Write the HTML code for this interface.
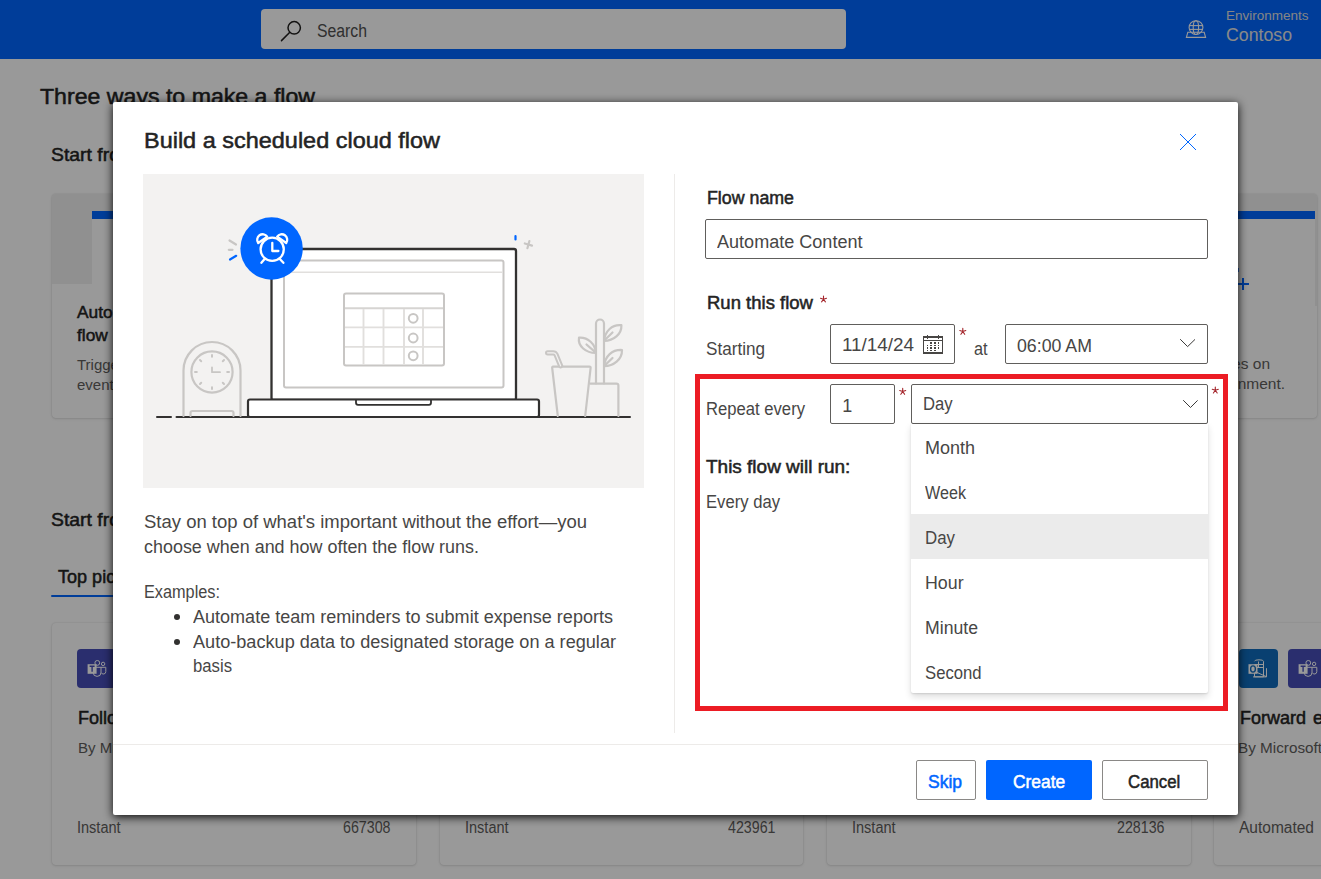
<!DOCTYPE html>
<html>
<head>
<meta charset="utf-8">
<style>
html,body{margin:0;padding:0;}
body{width:1321px;height:879px;overflow:hidden;position:relative;background:#ffffff;font-family:"Liberation Sans",sans-serif;}
.a{position:absolute;box-sizing:border-box;}
.t{position:absolute;white-space:nowrap;line-height:1;transform-origin:0 0;}
#hdr{left:0;top:0;width:1321px;height:59px;background:#0066ff;}
#search{left:261px;top:9px;width:585px;height:40px;background:#ffffff;border-radius:4px;}
.card{position:absolute;box-sizing:border-box;background:#ffffff;border-radius:4px;box-shadow:0 0 2px rgba(0,0,0,0.14),0 1px 3px rgba(0,0,0,0.10);overflow:hidden;}
#overlay{left:0;top:0;width:1321px;height:879px;background:rgba(0,0,0,0.4);}
#modal{left:113px;top:102px;width:1125px;height:713px;background:#ffffff;border-radius:2px;
  box-shadow:0 2px 10px rgba(0,0,0,0.95);}
.inp{position:absolute;box-sizing:border-box;border:1px solid #605e5c;border-radius:2px;background:#fff;}
.btn{position:absolute;box-sizing:border-box;border-radius:2px;}
</style>
</head>
<body>
<!-- ===== background page ===== -->
<div class="a" id="hdr"></div>
<div class="a" id="search"></div>
<svg class="a" style="left:276px;top:18px" width="30" height="28" viewBox="276 18 30 28">
  <circle cx="294.2" cy="27.8" r="6.2" fill="none" stroke="#201f1e" stroke-width="1.5"/>
  <line x1="289.8" y1="32.3" x2="281.5" y2="40.6" stroke="#201f1e" stroke-width="1.5" stroke-linecap="round"/>
</svg>
<svg class="a" style="left:1182px;top:14px" width="28" height="28" viewBox="1182 14 28 28">
  <g fill="none" stroke="#ffffff" stroke-width="1.1">
    <path d="M1187.8,32.3 H1204.2 L1205.6,37.4 H1186.4 Z"/>
    <circle cx="1196" cy="27.6" r="6.9"/>
    <ellipse cx="1195.9" cy="27.6" rx="2.7" ry="6.9"/>
    <line x1="1189.3" y1="25.6" x2="1202.7" y2="25.6"/>
    <line x1="1189.3" y1="29.4" x2="1202.7" y2="29.4"/>
  </g>
</svg>

<!-- top cards -->
<div class="card" style="left:52px;top:194px;width:406px;height:224px;">
  <div class="a" style="left:0;top:0;width:406px;height:90px;background:#f0f0f0;"></div>
  <div class="a" style="left:40px;top:17px;width:366px;height:73px;background:#ffffff;border-top:8px solid #0066ff;"></div>
</div>
<div class="card" style="left:911px;top:194px;width:406px;height:224px;">
  <div class="a" style="left:0;top:0;width:406px;height:112px;background:#f0f0f0;"></div>
  <div class="a" style="left:0;top:17px;width:404px;height:95px;background:#ffffff;border-top:8px solid #0066ff;"></div>
  <svg class="a" style="left:320px;top:70px" width="20" height="26" viewBox="1231 264 20 26">
    <line x1="1243" y1="278" x2="1243" y2="290" stroke="#0066ff" stroke-width="2"/>
    <line x1="1237" y1="284" x2="1249" y2="284" stroke="#0066ff" stroke-width="2"/>
    <line x1="1238" y1="268" x2="1238" y2="272" stroke="#0066ff" stroke-width="1.5"/>
  </svg>
</div>
<!-- tab underline -->
<div class="a" style="left:50.5px;top:595px;width:90px;height:2px;border-radius:1px;background:#0066ff;"></div>
<!-- bottom cards -->
<div class="card" style="left:52px;top:623px;width:363.5px;height:242px;">
  <div class="a" style="left:25px;top:26px;width:39px;height:39px;border-radius:4px;background:#464eb8;"></div>
</div>
<svg class="a" style="left:77px;top:649px" width="39" height="39" viewBox="0 0 39 39">
  <g fill="none" stroke="#ffffff" stroke-width="1">
    <circle cx="20.3" cy="13.9" r="2.4"/>
    <circle cx="26.1" cy="14.9" r="1.7"/>
    <path d="M16.5,18.3 H24 V23.5 A3.9,3.9 0 0 1 16.2,23.5"/>
    <path d="M24,18.3 H28.8 V22.6 A2.4,2.4 0 0 1 24.2,23.6"/>
  </g>
  <rect x="10.6" y="15.2" width="9" height="9.6" fill="#ffffff"/>
  <path d="M12.6,17.3 H17.6 M15.1,17.3 V22.8" stroke="#464eb8" stroke-width="1.4"/>
</svg>
<div class="card" style="left:439.5px;top:623px;width:363.5px;height:242px;"></div>
<div class="card" style="left:827px;top:623px;width:363.5px;height:242px;"></div>
<div class="card" style="left:1213.5px;top:623px;width:363.5px;height:242px;">
  <div class="a" style="left:25px;top:26px;width:39px;height:39px;border-radius:4px;background:#0f6cbd;"></div>
  <div class="a" style="left:74.5px;top:26px;width:39px;height:39px;border-radius:4px;background:#464eb8;"></div>
</div>
<svg class="a" style="left:1238.5px;top:649px" width="39" height="39" viewBox="0 0 39 39">
  <g fill="none" stroke="#ffffff" stroke-width="1">
    <path d="M15.5,12.3 Q15.5,10.8 20,10.8 Q24.5,10.8 24.5,12.3 V27.8 H15.5 V20"/>
    <line x1="19.5" y1="12.5" x2="19.5" y2="19"/>
    <line x1="15.5" y1="15.5" x2="24.5" y2="15.5"/>
    <line x1="15.5" y1="18.5" x2="24.5" y2="18.5"/>
    <path d="M14,27.9 H27.5 V19.2"/>
    <path d="M17.5,23.2 L27,27.5"/>
  </g>
  <rect x="9.5" y="15.2" width="9" height="9.6" fill="#ffffff"/>
  <ellipse cx="14" cy="20" rx="2.4" ry="3.1" fill="none" stroke="#0f6cbd" stroke-width="1.4"/>
</svg>
<svg class="a" style="left:1288px;top:649px" width="39" height="39" viewBox="0 0 39 39">
  <g fill="none" stroke="#ffffff" stroke-width="1">
    <circle cx="20.3" cy="13.9" r="2.4"/>
    <circle cx="26.1" cy="14.9" r="1.7"/>
    <path d="M16.5,18.3 H24 V23.5 A3.9,3.9 0 0 1 16.2,23.5"/>
    <path d="M24,18.3 H28.8 V22.6 A2.4,2.4 0 0 1 24.2,23.6"/>
  </g>
  <rect x="10.6" y="15.2" width="9" height="9.6" fill="#ffffff"/>
  <path d="M12.6,17.3 H17.6 M15.1,17.3 V22.8" stroke="#464eb8" stroke-width="1.4"/>
</svg>
<div class="t" style="left:317.0px;top:22.46px;font-size:18px;font-weight:400;color:#505050;transform:scaleX(0.8765);">Search</div>
<div class="t" style="left:1226.0px;top:8.70px;font-size:13px;font-weight:400;color:#dedede;transform:scaleX(1.0379);">Environments</div>
<div class="t" style="left:1226.2px;top:25.64px;font-size:18.5px;font-weight:400;color:#e4e4e4;transform:scaleX(0.9578);">Contoso</div>
<div class="t" style="left:40.0px;top:86.50px;font-size:21.5px;-webkit-text-stroke:0.5px #242424;color:#242424;transform:scaleX(1.0754);">Three ways to make a flow</div>
<div class="t" style="left:50.5px;top:145.32px;font-size:19px;-webkit-text-stroke:0.5px #242424;color:#242424;transform:scaleX(1.0200);">Start from blank</div>
<div class="t" style="left:77.0px;top:303.91px;font-size:17px;-webkit-text-stroke:0.5px #242424;color:#242424;transform:scaleX(1.0200);">Automated cloud</div>
<div class="t" style="left:77.0px;top:326.71px;font-size:17px;-webkit-text-stroke:0.5px #242424;color:#242424;transform:scaleX(1.0200);">flow</div>
<div class="t" style="left:77.0px;top:356.60px;font-size:15px;font-weight:400;color:#605e5c;">Triggered by a designated</div>
<div class="t" style="left:77.0px;top:376.50px;font-size:15px;font-weight:400;color:#605e5c;">event.</div>
<div class="t" style="left:1158.0px;top:356.48px;font-size:15.5px;font-weight:400;color:#605e5c;">flow changes on</div>
<div class="t" style="left:1144.6px;top:376.48px;font-size:15.5px;font-weight:400;color:#605e5c;">in your environment.</div>
<div class="t" style="left:50.5px;top:509.82px;font-size:19px;-webkit-text-stroke:0.5px #242424;color:#242424;transform:scaleX(1.0200);">Start from a template</div>
<div class="t" style="left:57.5px;top:568.52px;font-size:17.7px;-webkit-text-stroke:0.5px #242424;color:#242424;transform:scaleX(1.0200);">Top picks</div>
<div class="t" style="left:78.3px;top:709.52px;font-size:17.7px;-webkit-text-stroke:0.5px #242424;color:#242424;transform:scaleX(1.0200);">Follow up on a message</div>
<div class="t" style="left:77.5px;top:741.13px;font-size:14.5px;font-weight:400;color:#605e5c;transform:scaleX(1.0405);">By Microsoft</div>
<div class="t" style="left:77.0px;top:820.49px;font-size:15.6px;font-weight:400;color:#605e5c;transform:scaleX(0.9314);">Instant</div>
<div class="t" style="left:1239.7px;top:709.52px;font-size:17.7px;-webkit-text-stroke:0.5px #242424;color:#242424;transform:scaleX(1.0173);">Forward</div>
<div class="t" style="left:1312.9px;top:709.52px;font-size:17.7px;-webkit-text-stroke:0.5px #242424;color:#242424;transform:scaleX(1.0200);">emails</div>
<div class="t" style="left:1238.3px;top:741.13px;font-size:14.5px;font-weight:400;color:#605e5c;transform:scaleX(1.0531);">By Microsoft</div>
<div class="t" style="left:1238.5px;top:820.49px;font-size:15.6px;font-weight:400;color:#605e5c;transform:scaleX(0.9944);">Automated</div>
<div class="t" style="left:464.7px;top:820.49px;font-size:15.6px;font-weight:400;color:#605e5c;transform:scaleX(0.9314);">Instant</div>
<div class="t" style="left:851.5px;top:820.49px;font-size:15.6px;font-weight:400;color:#605e5c;transform:scaleX(0.9314);">Instant</div>
<div class="t" style="left:343.0px;top:820.49px;font-size:15.6px;font-weight:400;color:#605e5c;transform:scaleX(0.9126);">667308</div>
<div class="t" style="left:728.3px;top:820.49px;font-size:15.6px;font-weight:400;color:#605e5c;transform:scaleX(0.9126);">423961</div>
<div class="t" style="left:1117.0px;top:820.49px;font-size:15.6px;font-weight:400;color:#605e5c;transform:scaleX(0.9126);">228136</div>

<!-- ===== overlay ===== -->
<div class="a" id="overlay"></div>

<!-- ===== modal ===== -->
<div class="a" id="modal"></div>
<svg class="a" style="left:1175px;top:129px" width="26" height="26" viewBox="1175 129 26 26">
  <path d="M1180,134 L1196,150 M1196,134 L1180,150" stroke="#0066ff" stroke-width="1" fill="none"/>
</svg>

<!-- illustration -->
<svg class="a" style="left:143px;top:174px" width="501" height="314" viewBox="143 174 501 314">
  <rect x="143" y="174" width="501" height="314" fill="#f3f2f1"/>
  <!-- ground -->
  <g stroke="#323130" stroke-width="2" stroke-linecap="round" fill="none">
    <line x1="157" y1="417" x2="171" y2="417"/>
    <line x1="176.5" y1="417" x2="630" y2="417"/>
  </g>
  <!-- mantel clock -->
  <g fill="none" stroke="#c8c6c4" stroke-width="2.2" stroke-linecap="round" stroke-linejoin="round">
    <path d="M183.5,416 V370.5 A28.5,28.5 0 0 1 240.5,370.5 V416"/>
    <circle cx="212" cy="372" r="20.6" stroke-width="2.2"/>
    <path d="M190.5,416 V413 Q190.5,411 192.5,411 H231.5 Q233.5,411 233.5,413 V416"/>
    <polyline points="212,367.5 212,372.2 220,372.2" stroke-width="1.8"/>
  </g>
  <g stroke="#c8c6c4" stroke-width="2" stroke-linecap="round">
    <line x1="212" y1="355" x2="212" y2="356.8"/>
    <line x1="212" y1="387.2" x2="212" y2="389"/>
    <line x1="195" y1="372" x2="196.8" y2="372"/>
    <line x1="227.2" y1="372" x2="229" y2="372"/>
    <line x1="200" y1="360" x2="201.2" y2="361.2"/>
    <line x1="222.8" y1="382.8" x2="224" y2="384"/>
    <line x1="224" y1="360" x2="222.8" y2="361.2"/>
    <line x1="201.2" y1="382.8" x2="200" y2="384"/>
  </g>
  <!-- laptop -->
  <rect x="271.5" y="249" width="244.5" height="151" rx="2" fill="#ffffff" stroke="#323130" stroke-width="2.3"/>
  <rect x="284" y="260.5" width="219.5" height="127" rx="2" fill="#ffffff" stroke="#c8c6c4" stroke-width="2"/>
  <line x1="285" y1="272.3" x2="502.5" y2="272.3" stroke="#e1dfdd" stroke-width="1.6"/>
  <rect x="344" y="293.5" width="100" height="72" rx="2" fill="#ffffff" stroke="#c8c6c4" stroke-width="2"/>
  <g stroke="#e1dfdd" stroke-width="1.9">
    <line x1="345" y1="308.3" x2="443" y2="308.3" stroke="#d6d4d2"/>
    <line x1="345" y1="327.4" x2="443" y2="327.4"/>
    <line x1="345" y1="346.9" x2="443" y2="346.9"/>
    <line x1="363.5" y1="309" x2="363.5" y2="364.6"/>
    <line x1="383.5" y1="309" x2="383.5" y2="364.6"/>
    <line x1="404" y1="309" x2="404" y2="364.6"/>
    <line x1="423" y1="309" x2="423" y2="364.6"/>
  </g>
  <g fill="#ffffff" stroke="#c8c6c4" stroke-width="2">
    <circle cx="413.2" cy="318.3" r="4.4"/>
    <circle cx="413.2" cy="338" r="4.4"/>
    <circle cx="413.2" cy="355.8" r="4.4"/>
  </g>
  <rect x="248" y="399.5" width="291" height="17.5" rx="2" fill="#ffffff" stroke="#323130" stroke-width="2.2"/>
  <path d="M356,400 V402.8 Q356,404.8 358,404.8 H429 Q431,404.8 431,402.8 V400" fill="none" stroke="#323130" stroke-width="1.8"/>
  <!-- alarm badge -->
  <circle cx="271.6" cy="248.5" r="31.2" fill="#0066ff"/>
  <g fill="none" stroke="#ffffff" stroke-width="2.3" stroke-linecap="round" stroke-linejoin="round">
    <circle cx="272.2" cy="249.3" r="11.6"/>
    <polyline points="272.3,242.8 272.3,251 278.4,251"/>
    <path d="M258.2,243 A5.4,5.4 0 0 1 267.2,236.6 Z"/>
    <path d="M286.2,243 A5.4,5.4 0 0 0 277.2,236.6 Z"/>
    <line x1="264.6" y1="259" x2="261.4" y2="262.8"/>
    <line x1="279.8" y1="259" x2="283.4" y2="262.8"/>
  </g>
  <!-- sparks -->
  <g stroke-width="2.2" stroke-linecap="round">
    <line x1="229.5" y1="240.5" x2="236" y2="244.5" stroke="#c8c6c4"/>
    <line x1="228.8" y1="249.8" x2="232.5" y2="249.8" stroke="#c8c6c4"/>
    <line x1="230" y1="259.5" x2="236.2" y2="255.8" stroke="#0066ff"/>
    <line x1="515.5" y1="236" x2="515.5" y2="239.5" stroke="#0066ff"/>
    <line x1="524.8" y1="243.5" x2="532" y2="245.6" stroke="#c8c6c4"/>
    <line x1="529.4" y1="241" x2="527.4" y2="248.2" stroke="#c8c6c4"/>
  </g>
  <!-- cup & plant -->
  <g fill="none" stroke="#c8c6c4" stroke-width="2.2" stroke-linecap="round" stroke-linejoin="round">
    <path d="M590.2,383.6 H616.4 Q618.4,383.6 618.4,385.6 V416"/>
    <path d="M596,383.4 V323.5 A4,4 0 0 1 604,323.5 V383.4"/>
    <path d="M595.8,353 C586,353 577.5,346 579,337.6 C588,337 595.4,344 595.8,353 Z"/>
    <line x1="595.5" y1="352.4" x2="586.5" y2="344.5"/>
    <path d="M604.2,340.8 C605,331 612,324.2 621.4,325.2 C621.8,334.2 613.5,340.8 604.2,340.8 Z"/>
    <line x1="604.8" y1="340" x2="612.5" y2="332.5"/>
    <path d="M604.2,366.2 C605,356.2 612,349.5 622,350 C622.2,359.5 613.5,366.2 604.2,366.2 Z"/>
    <line x1="604.8" y1="365.4" x2="612.5" y2="358"/>
    <path d="M553,366.6 H589.5 Q590.8,366.6 590.6,368 L585.2,416 H557.8 L552.2,368 Q552,366.6 553,366.6 Z" fill="#f3f2f1" stroke="none"/>
    <path d="M557.8,416 L552.2,368 Q552,366.6 553,366.6 H589.5 Q590.8,366.6 590.6,368 L585.2,416"/>
  </g>
  <g fill="none" stroke-linecap="round" stroke-linejoin="round">
    <path d="M560.6,365.8 L556,354.6 Q555.2,352.8 553.2,352.8 H547.6" stroke="#c8c6c4" stroke-width="5.2"/>
    <path d="M560.6,365.8 L556,354.6 Q555.2,352.8 553.2,352.8 H547.6" stroke="#f3f2f1" stroke-width="1.2"/>
  </g>
</svg>

<!-- divider -->
<div class="a" style="left:674px;top:174px;width:1px;height:559px;background:#edebe9;"></div>

<!-- inputs -->
<div class="inp" style="left:705px;top:219px;width:503px;height:40px;"></div>
<div class="inp" style="left:830px;top:324px;width:125px;height:40px;"></div>
<div class="inp" style="left:1005px;top:324px;width:203px;height:40px;"></div>
<div class="inp" style="left:830px;top:384px;width:65px;height:40px;"></div>
<div class="inp" style="left:911px;top:384px;width:297px;height:40px;"></div>

<!-- calendar icon -->
<svg class="a" style="left:0;top:0" width="1321" height="879" viewBox="0 0 1321 879" shape-rendering="crispEdges"><g fill="#484644"><rect x="923" y="336" width="20" height="2"/><rect x="923" y="340" width="20" height="1"/><rect x="923" y="336" width="1" height="18"/><rect x="942" y="336" width="1" height="18"/><rect x="923" y="352" width="20" height="2"/><rect x="927" y="335" width="1" height="4"/><rect x="938" y="335" width="1" height="4"/><rect x="930" y="342" width="2" height="2"/><rect x="934" y="342" width="2" height="2"/><rect x="938" y="342" width="1" height="2"/><rect x="927" y="345" width="1" height="1"/><rect x="930" y="345" width="2" height="1"/><rect x="934" y="345" width="2" height="1"/><rect x="938" y="345" width="1" height="1"/><rect x="927" y="347" width="1" height="2"/><rect x="930" y="347" width="2" height="2"/><rect x="934" y="347" width="2" height="2"/><rect x="938" y="347" width="1" height="2"/><rect x="927" y="350" width="1" height="1"/><rect x="930" y="350" width="2" height="1"/><rect x="934" y="350" width="2" height="1"/></g></svg>

<!-- chevrons -->
<svg class="a" style="left:1178px;top:336px" width="22" height="14" viewBox="1178 336 22 14">
  <polyline points="1180.2,339.2 1187.6,346.6 1195,339.4" fill="none" stroke="#3b3a39" stroke-width="1"/>
</svg>
<svg class="a" style="left:1180px;top:396px" width="22" height="14" viewBox="1180 396 22 14">
  <polyline points="1183.2,400.2 1190.5,407.5 1197.6,400.4" fill="none" stroke="#3b3a39" stroke-width="1"/>
</svg>

<!-- asterisks -->
<svg class="a" style="left:0;top:0" width="1321" height="879" viewBox="0 0 1321 879">
  <g stroke="#a4262c" stroke-width="1.1" stroke-linecap="round">
    <g transform="translate(823.5,299.2)"><path d="M0,-3.2 V0 M0,0 L-3,-1 M0,0 L3,-1 M0,0 L-1.9,2.7 M0,0 L1.9,2.7"/></g>
    <g transform="translate(962.8,331.6)"><path d="M0,-3.2 V0 M0,0 L-3,-1 M0,0 L3,-1 M0,0 L-1.9,2.7 M0,0 L1.9,2.7"/></g>
    <g transform="translate(902.7,391.6)"><path d="M0,-3.2 V0 M0,0 L-3,-1 M0,0 L3,-1 M0,0 L-1.9,2.7 M0,0 L1.9,2.7"/></g>
    <g transform="translate(1215.3,390.3)"><path d="M0,-3.2 V0 M0,0 L-3,-1 M0,0 L3,-1 M0,0 L-1.9,2.7 M0,0 L1.9,2.7"/></g>
  </g>
</svg>

<!-- red highlight -->
<div class="a" style="left:695px;top:374px;width:533px;height:337px;border:5px solid #ec1c24;"></div>

<!-- dropdown list -->
<div class="a" style="left:911px;top:424px;width:297px;height:269px;background:#ffffff;border-radius:0 0 2px 2px;box-shadow:0 3.2px 7.2px rgba(0,0,0,0.13),0 0.6px 1.8px rgba(0,0,0,0.11);"></div>
<div class="a" style="left:911px;top:514px;width:297px;height:44.5px;background:#ebebeb;"></div>

<!-- footer -->
<div class="a" style="left:113px;top:744px;width:1125px;height:1px;background:#edebe9;"></div>
<div class="btn" style="left:916px;top:760px;width:60px;height:40px;border:1px solid #8a8886;background:#fff;"></div>
<div class="btn" style="left:986px;top:760px;width:106px;height:40px;background:#0066ff;"></div>
<div class="btn" style="left:1102px;top:760px;width:106px;height:40px;border:1px solid #8a8886;background:#fff;"></div>

<div class="a" style="left:173.5px;top:613.7px;width:6px;height:6px;border-radius:50%;background:#323130;"></div>
<div class="a" style="left:173.5px;top:638.7px;width:6px;height:6px;border-radius:50%;background:#323130;"></div>
<div class="t" style="left:144.0px;top:131.30px;font-size:21.5px;-webkit-text-stroke:0.5px #242424;color:#242424;transform:scaleX(1.0910);">Build a scheduled cloud flow</div>
<div class="t" style="left:143.6px;top:513.99px;font-size:17.5px;font-weight:400;color:#474645;transform:scaleX(1.0564);">Stay on top of what&#x27;s important without the effort—you</div>
<div class="t" style="left:143.6px;top:538.89px;font-size:17.5px;font-weight:400;color:#474645;transform:scaleX(1.0248);">choose when and how often the flow runs.</div>
<div class="t" style="left:143.6px;top:583.59px;font-size:17.5px;font-weight:400;color:#474645;transform:scaleX(0.9302);">Examples:</div>
<div class="t" style="left:193.4px;top:608.69px;font-size:17.5px;font-weight:400;color:#474645;transform:scaleX(1.0305);">Automate team reminders to submit expense reports</div>
<div class="t" style="left:193.4px;top:633.89px;font-size:17.5px;font-weight:400;color:#474645;transform:scaleX(1.0352);">Auto-backup data to designated storage on a regular</div>
<div class="t" style="left:193.4px;top:657.89px;font-size:17.5px;font-weight:400;color:#474645;transform:scaleX(0.9545);">basis</div>
<div class="t" style="left:706.5px;top:189.99px;font-size:17.5px;-webkit-text-stroke:0.5px #242424;color:#242424;transform:scaleX(1.0164);">Flow name</div>
<div class="t" style="left:716.5px;top:232.86px;font-size:18px;font-weight:400;color:#474645;transform:scaleX(1.0028);">Automate Content</div>
<div class="t" style="left:706.5px;top:294.79px;font-size:17.5px;-webkit-text-stroke:0.5px #242424;color:#242424;transform:scaleX(1.0580);">Run this flow</div>
<div class="t" style="left:705.5px;top:341.39px;font-size:17.5px;font-weight:400;color:#474645;transform:scaleX(0.9782);">Starting</div>
<div class="t" style="left:842.0px;top:336.46px;font-size:18px;font-weight:400;color:#474645;transform:scaleX(1.0475);">11/14/24</div>
<div class="t" style="left:973.6px;top:341.29px;font-size:17.5px;font-weight:400;color:#474645;transform:scaleX(0.9309);">at</div>
<div class="t" style="left:1016.5px;top:337.46px;font-size:18px;font-weight:400;color:#474645;transform:scaleX(0.9860);">06:00 AM</div>
<div class="t" style="left:706.3px;top:401.29px;font-size:17.5px;font-weight:400;color:#474645;transform:scaleX(0.9511);">Repeat every</div>
<div class="t" style="left:842.3px;top:397.46px;font-size:18px;font-weight:400;color:#474645;">1</div>
<div class="t" style="left:923.0px;top:395.46px;font-size:18px;font-weight:400;color:#474645;transform:scaleX(0.9245);">Day</div>
<div class="t" style="left:706.0px;top:459.09px;font-size:17.5px;-webkit-text-stroke:0.5px #242424;color:#242424;transform:scaleX(1.0838);">This flow will run:</div>
<div class="t" style="left:706.3px;top:494.49px;font-size:17.5px;font-weight:400;color:#474645;transform:scaleX(0.9510);">Every day</div>
<div class="t" style="left:925.0px;top:439.69px;font-size:17.5px;font-weight:400;color:#474645;transform:scaleX(1.0279);">Month</div>
<div class="t" style="left:925.0px;top:484.69px;font-size:17.5px;font-weight:400;color:#474645;transform:scaleX(0.9230);">Week</div>
<div class="t" style="left:925.0px;top:529.69px;font-size:17.5px;font-weight:400;color:#474645;transform:scaleX(0.9639);">Day</div>
<div class="t" style="left:925.0px;top:574.69px;font-size:17.5px;font-weight:400;color:#474645;transform:scaleX(1.0175);">Hour</div>
<div class="t" style="left:925.0px;top:619.69px;font-size:17.5px;font-weight:400;color:#474645;transform:scaleX(1.0089);">Minute</div>
<div class="t" style="left:925.0px;top:664.69px;font-size:17.5px;font-weight:400;color:#474645;transform:scaleX(0.9535);">Second</div>
<div class="t" style="left:928.3px;top:774.29px;font-size:17.5px;-webkit-text-stroke:0.5px #0066ff;color:#0066ff;transform:scaleX(0.9986);">Skip</div>
<div class="t" style="left:1012.5px;top:774.29px;font-size:17.5px;-webkit-text-stroke:0.5px #ffffff;color:#ffffff;transform:scaleX(0.9937);">Create</div>
<div class="t" style="left:1128.3px;top:774.29px;font-size:17.5px;-webkit-text-stroke:0.5px #242424;color:#242424;transform:scaleX(0.9599);">Cancel</div>
</body>
</html>
